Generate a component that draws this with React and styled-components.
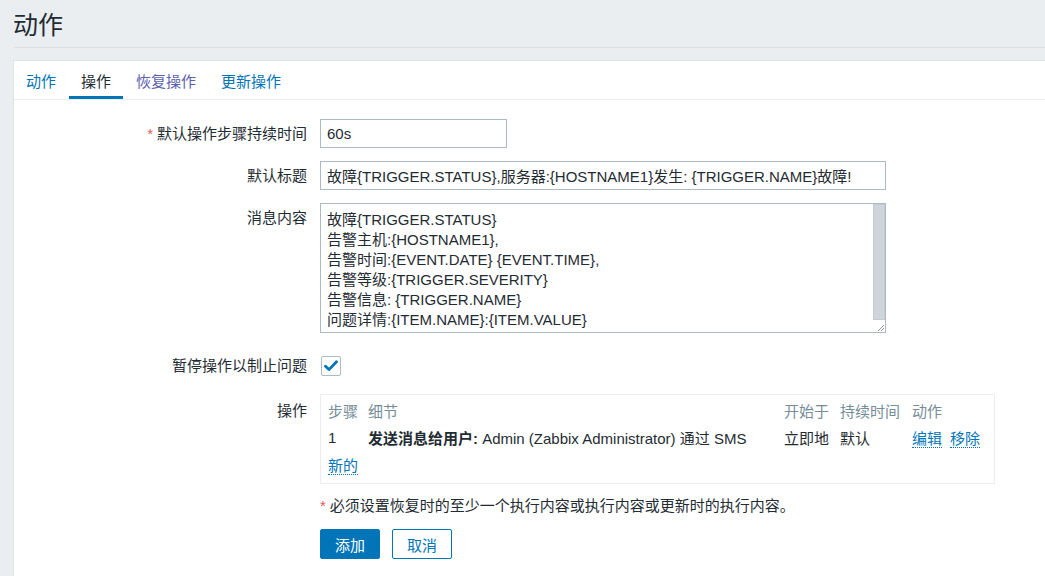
import React from "react";
import styled, { createGlobalStyle } from "styled-components";

const GlobalStyle = createGlobalStyle`
  html, body {
    margin: 0;
    padding: 0;
    background: #ebeef0;
    font-family: "Liberation Sans", "Noto Sans CJK SC", sans-serif;
    font-size: 15px;
    color: #1f2c33;
  }
  * { box-sizing: border-box; }
`;

const Page = styled.div`
  width: 1045px;
  height: 576px;
  overflow: hidden;
  padding: 0 0 0 13px;
`;

const Header = styled.header`
  height: 48px;
  border-bottom: 1px solid #dce1e4;
  display: flex;
  align-items: center;
`;

const Title = styled.h1`
  margin: 0;
  font-size: 25px;
  font-weight: normal;
  color: #1f2c33;
  padding-bottom: 1px;
`;

const Panel = styled.div`
  margin-top: 12px;
  background: #fff;
  border: 1px solid #dfe4e7;
  border-right: none;
  min-height: 540px;
`;

const Tabs = styled.nav`
  display: flex;
  gap: 1px;
  height: 39px;
  border-bottom: 1px solid #ebeef0;
`;

const Tab = styled.a`
  display: flex;
  align-items: center;
  padding: 0 12px;
  height: 100%;
  color: ${(p) => (p.$active ? "#1f2c33" : p.$visited ? "#5b5fad" : "#0275b8")};
  border-bottom: 3px solid ${(p) => (p.$active ? "#0275b8" : "transparent")};
  padding-top: 3px;
  cursor: pointer;
`;

const Form = styled.div`
  padding: 19px 0 0 0;
`;

const Row = styled.div`
  display: grid;
  grid-template-columns: 293px 1fr;
  column-gap: 13px;
  margin-bottom: ${(p) => p.$gap ?? 13}px;
  align-items: start;
`;

const Label = styled.label`
  text-align: right;
  line-height: ${(p) => p.$lh ?? 29}px;
  padding-top: ${(p) => p.$pt ?? 0}px;
  color: #1f2c33;
`;

const Req = styled.span`
  color: #e45959;
  margin-right: 4px;
`;

const Input = styled.input`
  width: ${(p) => p.$w}px;
  height: 29px;
  border: 1px solid #acbbc2;
  padding: 0 6px;
  font: inherit;
  color: #1f2c33;
  outline: none;
  background: #fff;
`;

const TextFrame = styled.div`
  display: flex;
  width: 566px;
  height: 130px;
  border: 1px solid #acbbc2;
  background: #fff;
`;

const TextArea = styled.textarea`
  flex: 1;
  min-width: 0;
  border: none;
  padding: 6px 6px;
  font: inherit;
  line-height: 20px;
  color: #1f2c33;
  outline: none;
  resize: none;
  overflow: hidden;
`;

const ScrollBar = styled.div`
  width: 12px;
  display: flex;
  flex-direction: column;
`;

const ScrollTrack = styled.div`
  flex: 1;
  background: #cfd5da;
  border: 1px solid #c2cbd1;
`;

const Grip = styled.div`
  height: 12px;
  display: flex;
  align-items: flex-end;
  justify-content: flex-end;
`;

const CheckCell = styled.div`
  height: 29px;
  display: flex;
  align-items: center;
`;

const CheckBox = styled.span`
  display: inline-flex;
  align-items: center;
  justify-content: center;
  width: 20px;
  height: 20px;
  margin-left: 1px;
  border: 1px solid #acbbc2;
  border-radius: 2px;
  background: #fff;
`;

const OpsBox = styled.div`
  width: 675px;
  border: 1px solid #ebeef0;
  padding: 2px 7px 5px;
`;

const OpsTable = styled.table`
  border-collapse: collapse;
  table-layout: fixed;
  width: 100%;

  th {
    font-weight: normal;
    color: #768d99;
    text-align: left;
    height: 27px;
    padding: 0;
  }
  td {
    height: 27px;
    padding: 0;
    white-space: nowrap;
  }
`;

const Bold = styled.b`
  font-weight: bold;
`;

const Link = styled.a`
  color: #0275b8;
  border-bottom: 1px dotted #0275b8;
  cursor: pointer;
  margin-right: ${(p) => p.$mr ?? 0}px;
`;

const Note = styled.div`
  margin: 12px 0 0;
  line-height: 20px;
`;

const Buttons = styled.div`
  display: flex;
  gap: 12px;
  margin-top: 13px;
`;

const Button = styled.button`
  height: 30px;
  padding: 0 14px;
  font: inherit;
  border-radius: 2px;
  border: 1px solid #0275b8;
  background: ${(p) => (p.$primary ? "#0275b8" : "#fff")};
  color: ${(p) => (p.$primary ? "#fff" : "#0275b8")};
  cursor: pointer;
`;

const message = `故障{TRIGGER.STATUS}
告警主机:{HOSTNAME1},
告警时间:{EVENT.DATE} {EVENT.TIME},
告警等级:{TRIGGER.SEVERITY}
告警信息: {TRIGGER.NAME}
问题详情:{ITEM.NAME}:{ITEM.VALUE}`;

export default function App() {
  return (
    <>
      <GlobalStyle />
      <Page>
        <Header>
          <Title>动作</Title>
        </Header>
        <Panel>
          <Tabs>
            <Tab>动作</Tab>
            <Tab $active>操作</Tab>
            <Tab $visited>恢复操作</Tab>
            <Tab>更新操作</Tab>
          </Tabs>
          <Form>
            <Row>
              <Label>
                <Req>*</Req>默认操作步骤持续时间
              </Label>
              <div>
                <Input $w={187} defaultValue="60s" />
              </div>
            </Row>
            <Row>
              <Label>默认标题</Label>
              <div>
                <Input
                  $w={566}
                  defaultValue="故障{TRIGGER.STATUS},服务器:{HOSTNAME1}发生: {TRIGGER.NAME}故障!"
                />
              </div>
            </Row>
            <Row $gap={18}>
              <Label>消息内容</Label>
              <TextFrame>
                <TextArea defaultValue={message} />
                <ScrollBar>
                  <ScrollTrack />
                  <Grip>
                    <svg width="10" height="10" viewBox="0 0 10 10">
                      <path d="M9 3 L3 9 M9 6 L6 9" stroke="#8a969e" strokeWidth="1" />
                    </svg>
                  </Grip>
                </ScrollBar>
              </TextFrame>
            </Row>
            <Row $gap={14}>
              <Label>暂停操作以制止问题</Label>
              <CheckCell>
                <CheckBox>
                  <svg width="14" height="12" viewBox="0 0 14 12">
                    <path
                      d="M1.5 6.2 L5 9.6 L12.5 1.8"
                      fill="none"
                      stroke="#0275b8"
                      strokeWidth="2.8"
                      strokeLinecap="round"
                      strokeLinejoin="round"
                    />
                  </svg>
                </CheckBox>
              </CheckCell>
            </Row>
            <Row $gap={0}>
              <Label $lh={27} $pt={3}>操作</Label>
              <div>
                <OpsBox>
                  <OpsTable>
                    <colgroup>
                      <col style={{ width: 40 }} />
                      <col style={{ width: 416 }} />
                      <col style={{ width: 56 }} />
                      <col style={{ width: 72 }} />
                      <col />
                    </colgroup>
                    <thead>
                      <tr>
                        <th>步骤</th>
                        <th>细节</th>
                        <th>开始于</th>
                        <th>持续时间</th>
                        <th>动作</th>
                      </tr>
                    </thead>
                    <tbody>
                      <tr>
                        <td>1</td>
                        <td>
                          <Bold>发送消息给用户:</Bold> Admin (Zabbix Administrator) 通过 SMS
                        </td>
                        <td>立即地</td>
                        <td>默认</td>
                        <td>
                          <Link $mr={8}>编辑</Link>
                          <Link>移除</Link>
                        </td>
                      </tr>
                      <tr>
                        <td colSpan={5}>
                          <Link>新的</Link>
                        </td>
                      </tr>
                    </tbody>
                  </OpsTable>
                </OpsBox>
                <Note>
                  <Req>*</Req>必须设置恢复时的至少一个执行内容或执行内容或更新时的执行内容。
                </Note>
                <Buttons>
                  <Button $primary>添加</Button>
                  <Button>取消</Button>
                </Buttons>
              </div>
            </Row>
          </Form>
        </Panel>
      </Page>
    </>
  );
}
